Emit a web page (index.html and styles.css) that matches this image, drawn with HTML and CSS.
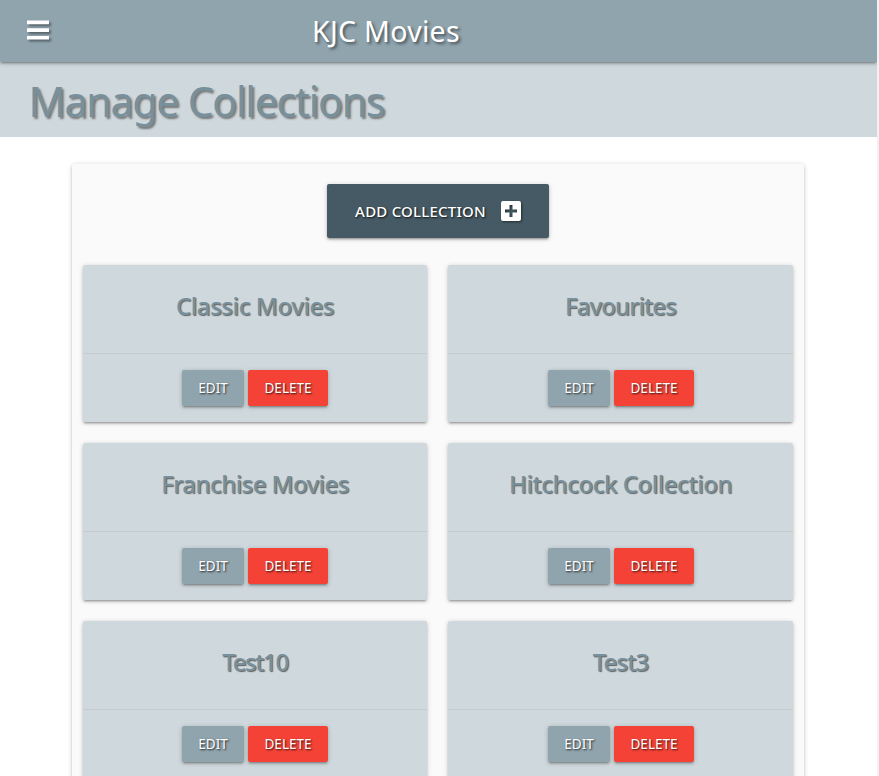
FILE: index.html
```
<!DOCTYPE html>
<html lang="en">
<head>
<meta charset="utf-8">
<title>KJC Movies</title>
<link rel="stylesheet" href="styles.css">
</head>
<body>
<div class="page">
  <nav class="navbar">
    <a class="menu" aria-label="Menu">
      <svg width="26" height="24" viewBox="0 0 26 24"><path d="M0 2.500h22v3.700H0zM0 10.200h22v3.700H0zM0 17.900h22v3.700H0z" fill="#fff"/></svg>
    </a>
    <a class="brand">KJC Movies</a>
  </nav>
  <header class="heading"><h1>Manage Collections</h1></header>
  <main class="panel">
    <a class="btn btn-add"><span>ADD COLLECTION</span>
      <svg width="20" height="20" viewBox="0 0 20 20"><path fill="#fff" fill-rule="evenodd" d="M2 0h16a2 2 0 0 1 2 2v16a2 2 0 0 1-2 2H2a2 2 0 0 1-2-2V2a2 2 0 0 1 2-2zM8.5 4v4.500H4v3h4.500V16h3v-4.500H16v-3h-4.500V4z"/></svg>
    </a>
    <div class="grid">
      <section class="card"><h2 class="t-classic">Classic Movies</h2><div class="actions"><a class="btn edit">EDIT</a><a class="btn delete">DELETE</a></div></section>
      <section class="card"><h2 class="t-fav">Favourites</h2><div class="actions"><a class="btn edit">EDIT</a><a class="btn delete">DELETE</a></div></section>
      <section class="card"><h2 class="t-franchise">Franchise Movies</h2><div class="actions"><a class="btn edit">EDIT</a><a class="btn delete">DELETE</a></div></section>
      <section class="card"><h2 class="t-hitch">Hitchcock Collection</h2><div class="actions"><a class="btn edit">EDIT</a><a class="btn delete">DELETE</a></div></section>
      <section class="card"><h2 class="t-ten">Test10</h2><div class="actions"><a class="btn edit">EDIT</a><a class="btn delete">DELETE</a></div></section>
      <section class="card"><h2 class="t-three">Test3</h2><div class="actions"><a class="btn edit">EDIT</a><a class="btn delete">DELETE</a></div></section>
    </div>
  </main>
</div>
</body>
</html>
```
FILE: styles.css
```
* { box-sizing: border-box; }
html { background: #f1f1f1; overflow: hidden; }
body {
  margin: 0;
  height: 776px;
  overflow: hidden;
  font-family: "Segoe UI", "Noto Sans", "Open Sans", sans-serif;
}
.page { width: 877px; height: 100%; background: #fff; overflow: hidden; }
.navbar {
  position: relative;
  display: grid;
  grid-template-columns: 312px 1fr;
  align-items: center;
  height: 62px;
  background: #90a4ae;
  box-shadow: 0 2px 2px 0 rgba(0,0,0,.14), 0 3px 1px -2px rgba(0,0,0,.12), 0 1px 5px 0 rgba(0,0,0,.2);
}
.menu { padding-left: 27px; height: 26px; }
.menu svg { display: block; filter: drop-shadow(2px 2px 1px rgba(0,0,0,.4)); }
.brand {
  color: #fff;
  font-size: 28.5px;
  line-height: 62px;
  letter-spacing: .3px;
  text-shadow: 2px 2px 3px rgba(0,0,0,.5);
}
.heading { height: 75px; padding-left: 28.5px; background: #cfd8dc; }
h1 {
  margin: 0;
  color: #78909c;
  font-size: 41px;
  font-weight: 400;
  line-height: 78px;
  letter-spacing: -1.2px;
  white-space: nowrap;
  text-shadow: 2px 2px 2px rgba(96,96,96,.8);
}
.panel {
  display: flex;
  flex-direction: column;
  align-items: center;
  width: 732px;
  height: 700px;
  margin: 27px 0 0 72px;
  padding: 20px 11px 0;
  border-radius: 2px;
  background: #fafafa;
  box-shadow: 0 2px 2px 0 rgba(0,0,0,.14), 0 3px 1px -2px rgba(0,0,0,.12), 0 1px 5px 0 rgba(0,0,0,.2);
}
.btn {
  display: flex;
  align-items: center;
  justify-content: center;
  height: 36px;
  border-radius: 2px;
  color: #fff;
  font-size: 13.5px;
  white-space: nowrap;
  text-shadow: 1px 1px 2px rgba(0,0,0,.8);
  box-shadow: 0 2px 2px 0 rgba(0,0,0,.14), 0 3px 1px -2px rgba(0,0,0,.12), 0 1px 5px 0 rgba(0,0,0,.2);
}
.btn-add {
  flex: none;
  gap: 15px;
  width: 222px;
  height: 54px;
  background: #455a64;
  font-size: 15px;
  font-weight: 500;
  letter-spacing: .22px;
}
.btn-add svg { filter: drop-shadow(1px 1px 1px rgba(0,0,0,.5)); }
.grid {
  display: grid;
  grid-template-columns: 344px 345px;
  gap: 21px;
  width: 100%;
  margin-top: 27px;
}
.card {
  height: 157px;
  border-radius: 2px;
  background: #cfd8dc;
  box-shadow: 0 2px 2px 0 rgba(0,0,0,.14), 0 3px 1px -2px rgba(0,0,0,.12), 0 1px 5px 0 rgba(0,0,0,.2);
}
h2 {
  height: 88px;
  margin: 0;
  color: #78909c;
  font-size: 24px;
  font-weight: 500;
  line-height: 82px;
  text-align: center;
  text-shadow: 1px 1px 1px rgba(80,80,80,.85);
}
.t-classic { letter-spacing: -.43px; }
.t-fav { letter-spacing: -.9px; }
.t-franchise { letter-spacing: -.58px; }
.t-hitch { letter-spacing: -.46px; }
.t-ten { letter-spacing: -1.4px; }
.t-three { letter-spacing: -.9px; }
.actions {
  display: flex;
  justify-content: center;
  gap: 4px;
  padding-top: 16px;
  border-top: 1px solid rgba(160,160,160,.2);
}
.card:nth-child(even) .actions { padding-left: 1px; }
.edit { width: 62px; background: #90a4ae; }
.delete { width: 80px; background: #f44336; }
```
